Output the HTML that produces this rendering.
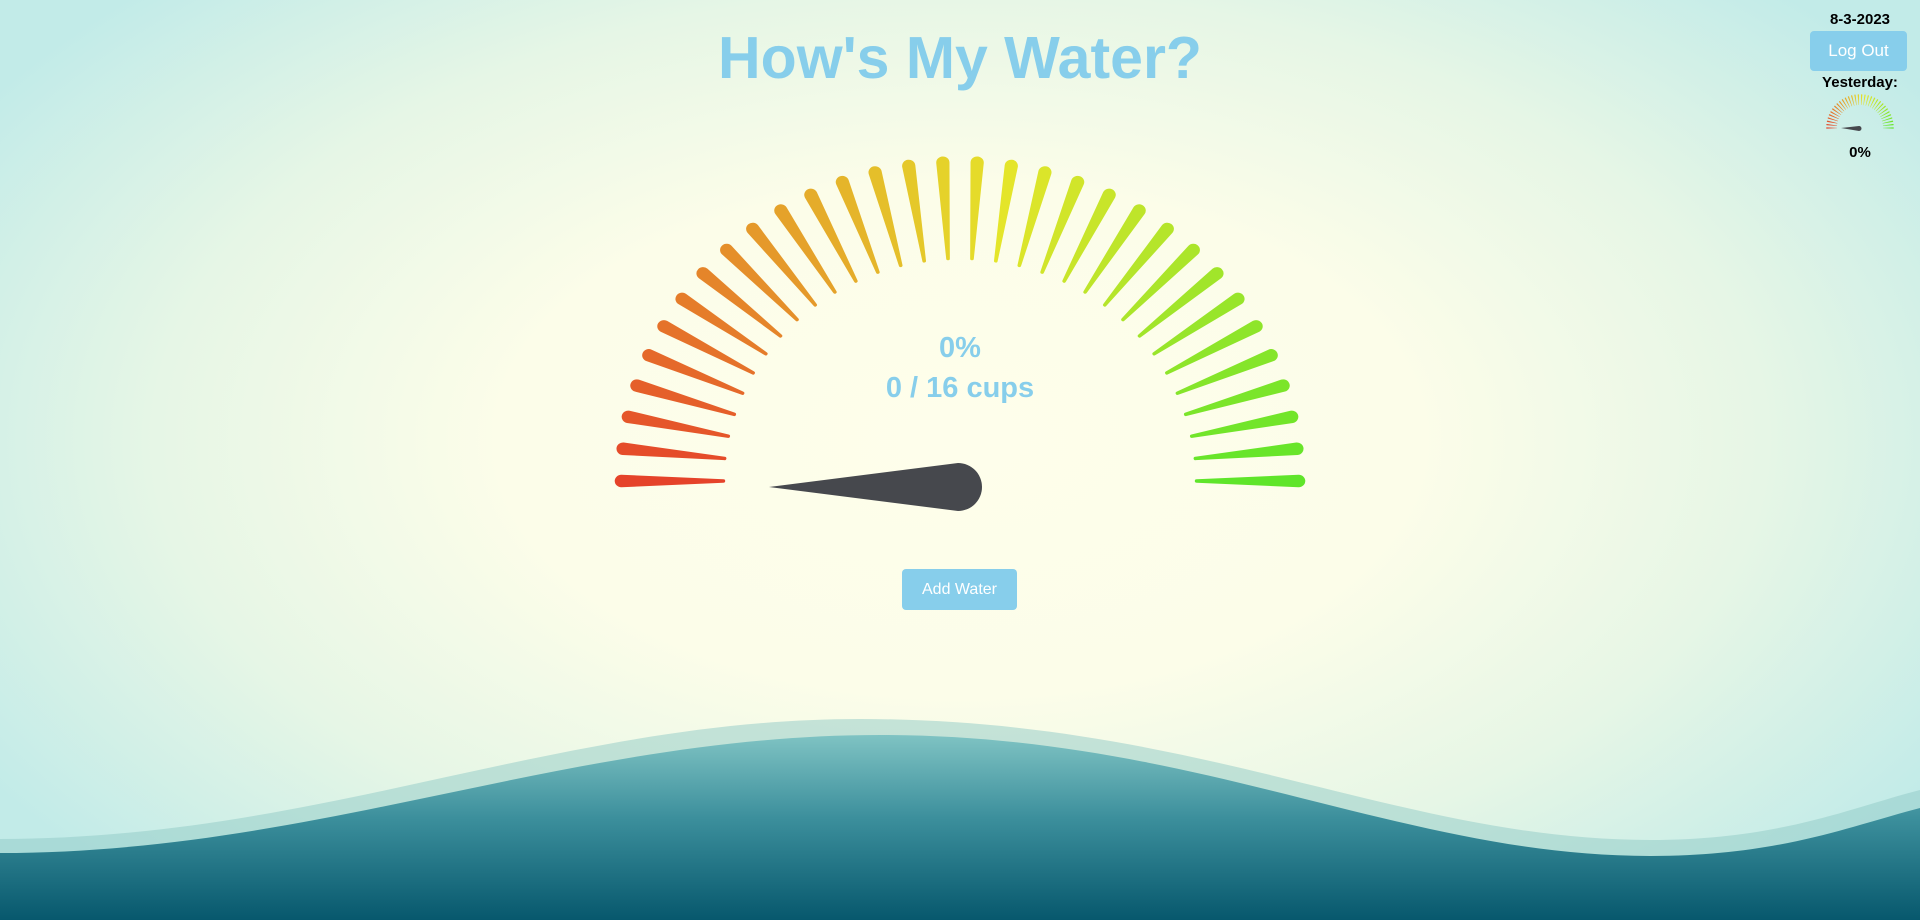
<!DOCTYPE html>
<html><head><meta charset="utf-8"><style>
html,body{margin:0;padding:0;width:1920px;height:920px;overflow:hidden}
body{position:relative;font-family:"Liberation Sans",sans-serif;
background:radial-gradient(ellipse 1150px 640px at 960px 440px,#fefeeb 0%,#fcfde9 40%,#e6f6e6 70%,#c2ebe8 100%);}
h1{position:absolute;top:24px;left:0;width:1920px;text-align:center;margin:0;font-size:59px;font-weight:bold;color:#87ceeb;letter-spacing:0}
.pct{position:absolute;left:0;width:1920px;text-align:center;font-weight:bold;color:#87ceeb;font-size:29px}
.btn{position:absolute;background:#87ceeb;color:#fff;border-radius:4px;text-align:center;font-size:16px}
.small{position:absolute;font-weight:bold;font-size:15px;color:#000;text-align:center}
svg{position:absolute;left:0;top:0}
</style></head><body>
<svg width="1920" height="920" viewBox="0 0 1920 920">
<defs><linearGradient id="wg" x1="0" y1="0" x2="0" y2="1">
<stop offset="0" stop-color="#7fc3c3"/><stop offset="0.45" stop-color="#3c8f9c"/><stop offset="1" stop-color="#07586d"/></linearGradient></defs>
<path d="M0,839 C320,839 560,719 860,719 C1200,719 1400,840 1650,840 C1780,840 1850,808 1920,790 L1920,920 L0,920 Z" fill="#8fcac6" opacity="0.5"/>
<path d="M0,853 C320,853 570,735 880,735 C1200,735 1400,856 1650,856 C1780,856 1850,826 1920,808 L1920,920 L0,920 Z" fill="url(#wg)"/>
<g transform="translate(960,481) scale(1.02,0.96)"><g id="gauge"></g></g>
<path d="M769,487 L958,463 A24,24 0 1 1 958,511 Z" fill="#46484d"/>
<g id="mini" transform="translate(1860,128) scale(0.1)"></g>
<path d="M1841,128 L1859,126 A2.5,2.5 0 1 1 1859,131 Z" fill="#46484d"/>
</svg>
<h1>How's My Water?</h1>
<div class="pct" style="top:332px">0%</div>
<div class="pct" style="top:372px">0 / 16 cups</div>
<div class="btn" style="left:902px;top:569px;width:115px;height:41px;line-height:41px">Add Water</div>
<div class="small" style="left:1810px;top:11px;width:100px">8-3-2023</div>
<div class="btn" style="left:1810px;top:31px;width:97px;height:40px;line-height:40px;font-size:17px">Log Out</div>
<div class="small" style="left:1810px;top:74px;width:100px">Yesterday:</div>
<div class="small" style="left:1810px;top:144px;width:100px">0%</div>
<script>
function build(id,cx,cy){
  var g=document.getElementById(id),s='';
  for(var i=0;i<32;i++){
    var a=i*180/31,h=8+95*i/31;
    s+='<path transform="translate('+cx+','+cy+') rotate('+a+')" d="M-332,-6.5 L-232,-1.8 A1.8,1.8 0 0 1 -232,1.8 L-332,6.5 A6.5,6.5 0 0 1 -332,-6.5 Z" fill="hsl('+h+',78%,53%)"/>';
  }
  g.innerHTML=s;
}
build('gauge',0,0);
build('mini',0,0);
</script>
</body></html>
